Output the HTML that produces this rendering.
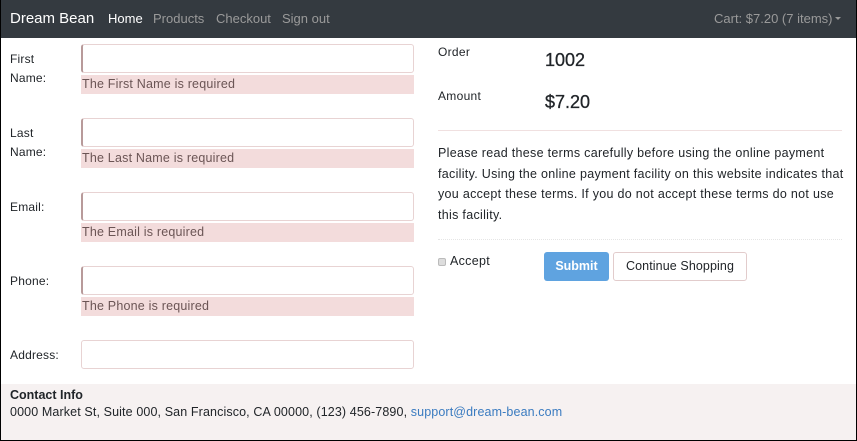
<!DOCTYPE html>
<html><head><meta charset="utf-8"><style>
*{box-sizing:border-box;margin:0;padding:0}
body{width:857px;height:441px;overflow:hidden;font-family:"Liberation Sans",sans-serif;color:#212529;background:#fff;position:relative}
.frame{position:absolute;left:0;top:0;width:857px;height:441px;border:1px solid #000;border-top:none;pointer-events:none}
.nav{position:absolute;left:0;top:0;width:857px;height:38px;background:#343a40}
.nav span{position:absolute;top:11px;font-size:13px;color:#9a9a9a}
.abs{position:absolute}
.lbl{position:absolute;left:10px;font-size:12px;line-height:19px;letter-spacing:0.2px}
.inp{position:absolute;left:81px;width:333px;height:29px;border:1px solid #e8d3d3;border-left:2px solid #b89a9a;border-radius:3px;background:#fff}
.err{position:absolute;left:81px;width:333px;height:19px;background:#f3dcdc;font-size:12.5px;color:#6b5555;padding:2px 0 0 1px;letter-spacing:0.2px}
.ft{position:absolute;left:1px;top:384px;width:855px;height:56px;background:#f6f1f1}
.t{font-size:12.5px;letter-spacing:0.3px}
</style></head><body>
<div class="nav">
<span style="left:10px;top:10px;font-size:15px;color:#fff">Dream Bean</span>
<span style="left:108px;color:#fff">Home</span>
<span style="left:153px">Products</span>
<span style="left:216px">Checkout</span>
<span style="left:282px">Sign out</span>
<span style="left:714px">Cart: $7.20 (7 items)</span>
<span style="left:835px;top:17px;width:0;height:0;border-left:3px solid transparent;border-right:3px solid transparent;border-top:3px solid #9a9a9a"></span>
</div>
<div class="lbl" style="top:50px">First<br>Name:</div>
<div class="inp" style="top:44px"></div><div class="err" style="top:75px">The First Name is required</div>
<div class="lbl" style="top:124px">Last<br>Name:</div>
<div class="inp" style="top:118px"></div><div class="err" style="top:149px">The Last Name is required</div>
<div class="lbl" style="top:198px">Email:</div>
<div class="inp" style="top:192px"></div><div class="err" style="top:223px">The Email is required</div>
<div class="lbl" style="top:272px">Phone:</div>
<div class="inp" style="top:266px"></div><div class="err" style="top:297px">The Phone is required</div>
<div class="lbl" style="top:346px">Address:</div>
<div class="inp" style="top:340px;border-left:1px solid #e8d3d3"></div>

<div class="abs t" style="left:438px;top:45px;font-size:12px">Order</div>
<div class="abs" style="left:545px;top:50px;font-size:18px;-webkit-text-stroke:0.3px #212529">1002</div>
<div class="abs t" style="left:438px;top:89px;font-size:12px">Amount</div>
<div class="abs" style="left:545px;top:92px;font-size:18px;-webkit-text-stroke:0.3px #212529">$7.20</div>
<div class="abs" style="left:438px;top:130px;width:404px;border-top:1px solid #f0e0e0"></div>
<div class="abs t" style="left:438px;top:143px;width:410px;line-height:20.5px">Please read these terms carefully before using the online payment facility. Using the online payment facility on this website indicates that you accept these terms. If you do not accept these terms do not use this facility.</div>
<div class="abs" style="left:438px;top:239px;width:404px;border-top:1px dotted #e5e5e5"></div>
<div class="abs" style="left:438px;top:258px;width:8px;height:8px;border:1px solid #bbb;background:#ddd;border-radius:2px"></div>
<div class="abs t" style="left:450px;top:254px">Accept</div>
<div class="abs" style="left:544px;top:252px;width:65px;height:29px;background:#5fa3e0;border-radius:3px;color:#fff;font-size:12.5px;font-weight:bold;text-align:center;line-height:29px">Submit</div>
<div class="abs t" style="left:613px;top:252px;width:134px;height:29px;border:1px solid #e2cccc;border-radius:3px;text-align:center;line-height:27px;letter-spacing:0.1px">Continue Shopping</div>

<div class="ft">
<div class="abs t" style="left:9px;top:4px;font-weight:bold;letter-spacing:0">Contact Info</div>
<div class="abs t" style="left:9px;top:21px;letter-spacing:0.12px">0000 Market St, Suite 000, San Francisco, CA 00000, (123) 456-7890, <span style="color:#3a7bc0">support@dream-bean.com</span></div>
</div>
<div class="frame"></div>
</body></html>
